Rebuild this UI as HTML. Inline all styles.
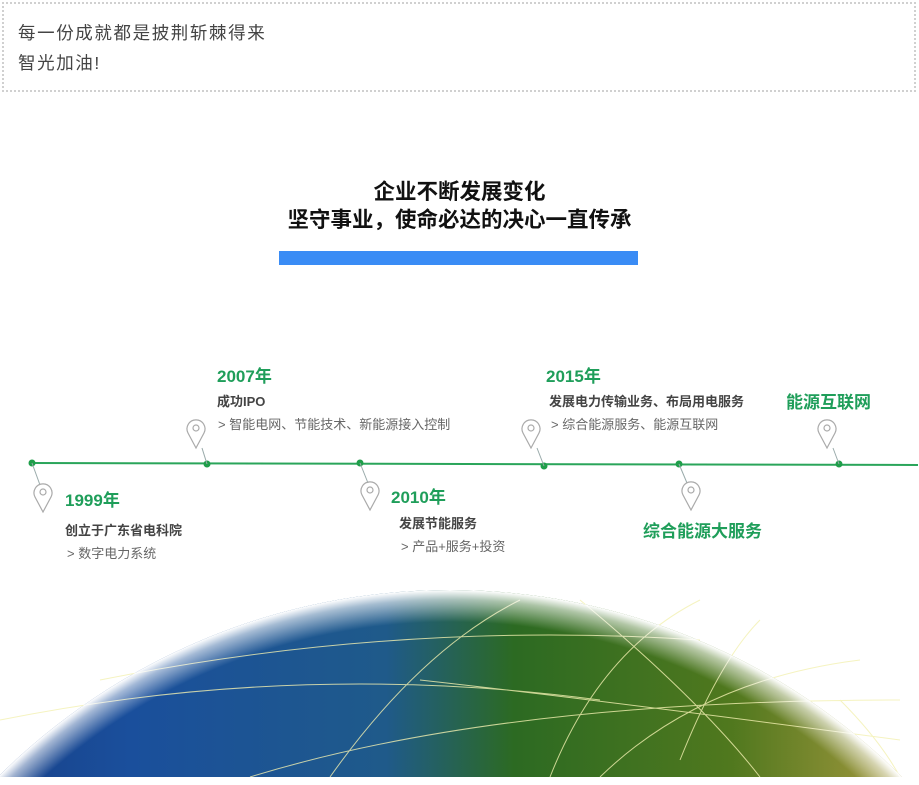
<!DOCTYPE html>
<html><head><meta charset="utf-8"><style>
html,body{margin:0;width:919px;height:785px;overflow:hidden}
body{background:#fff;position:relative;font-family:"Liberation Sans","Noto Sans CJK SC",sans-serif}
.a{position:absolute;white-space:nowrap}
.box{position:absolute;left:2px;top:2px;width:910px;height:86px;border:2px dotted #d0d0d0}
.q{font-size:17.5px;color:#444;letter-spacing:1.6px}
.t{font-size:21.5px;font-weight:bold;color:#111;left:0;width:919px;text-align:center}
.y{font-size:17px;font-weight:bold;color:#1f9e5a}
.h{font-size:13px;font-weight:bold;color:#444}
.s{font-size:13px;color:#666}
</style></head><body>
<div class="box"></div>
<div class="a q" style="left:18px;top:20px">每一份成就都是披荆斩棘得来</div>
<div class="a q" style="left:18px;top:50px">智光加油!</div>
<div class="a t" style="top:175px">企业不断发展变化</div>
<div class="a t" style="top:203px">坚守事业，使命必达的决心一直传承</div>
<div class="a" style="left:279px;top:251px;width:359px;height:14px;background:#3a8cf5"></div>

<svg class="a" style="left:0;top:0" width="919" height="785">
<defs>
<linearGradient id="g" x1="0" x2="1" y1="0" y2="0">
<stop offset="0" stop-color="#152f70"/><stop offset="0.25" stop-color="#1a4f9c"/>
<stop offset="0.45" stop-color="#1f5a8a"/><stop offset="0.55" stop-color="#2c6a22"/>
<stop offset="0.72" stop-color="#50781e"/><stop offset="0.86" stop-color="#a89a40"/>
<stop offset="1" stop-color="#d8c890"/></linearGradient>
<radialGradient id="w" cx="450" cy="1230" r="640" gradientUnits="userSpaceOnUse">
<stop offset="0.95" stop-color="#fff" stop-opacity="0"/><stop offset="0.985" stop-color="#fff" stop-opacity="0.6"/><stop offset="1" stop-color="#fff" stop-opacity="1"/></radialGradient>
<clipPath id="c"><rect x="0" y="560" width="919" height="217"/></clipPath>
</defs>
<g clip-path="url(#c)">
<circle cx="450" cy="1230" r="640" fill="url(#g)"/>
<path d="M0 720 Q300 660 600 700 M100 680 Q400 620 700 640 M330 777 Q420 650 520 600 M550 777 Q600 650 700 600 M600 777 Q700 680 860 660 M250 777 Q500 700 900 700 M680 760 Q720 660 760 620 M420 680 Q600 700 900 740 M580 600 Q700 700 760 777 M840 700 Q880 740 900 777" stroke="#f2f0b0" stroke-width="1" fill="none" opacity="0.8"/>
<circle cx="450" cy="1230" r="640" fill="url(#w)"/>
</g>
<line x1="32" y1="463" x2="918" y2="465" stroke="#2aa55a" stroke-width="2"/>
<g fill="#1f9e4a"><circle cx="32" cy="463" r="3.5"/><circle cx="207" cy="464" r="3.5"/><circle cx="360" cy="463" r="3.5"/><circle cx="544" cy="466" r="3.5"/><circle cx="679" cy="464" r="3.5"/><circle cx="839" cy="464" r="3.5"/></g>
<g fill="none" stroke="#9aa" stroke-width="1">
<path d="M32 463 L40 485"/><path d="M207 464 L202 448"/><path d="M360 463 L368 483"/><path d="M544 466 L537 448"/><path d="M679 464 L687 483"/><path d="M839 464 L833 448"/>
</g>
<g fill="none" stroke="#aaa" stroke-width="1.2">
<g transform="translate(43,485)"><path d="M0 27 L-8 12 A9 9 0 1 1 8 12 Z"/><circle cx="0" cy="7" r="3"/></g>
<g transform="translate(196,421)"><path d="M0 27 L-8 12 A9 9 0 1 1 8 12 Z"/><circle cx="0" cy="7" r="3"/></g>
<g transform="translate(370,483)"><path d="M0 27 L-8 12 A9 9 0 1 1 8 12 Z"/><circle cx="0" cy="7" r="3"/></g>
<g transform="translate(531,421)"><path d="M0 27 L-8 12 A9 9 0 1 1 8 12 Z"/><circle cx="0" cy="7" r="3"/></g>
<g transform="translate(691,483)"><path d="M0 27 L-8 12 A9 9 0 1 1 8 12 Z"/><circle cx="0" cy="7" r="3"/></g>
<g transform="translate(827,421)"><path d="M0 27 L-8 12 A9 9 0 1 1 8 12 Z"/><circle cx="0" cy="7" r="3"/></g>
</g>
</svg>

<div class="a y" style="left:217px;top:362px">2007年</div>
<div class="a h" style="left:217px;top:391px">成功IPO</div>
<div class="a s" style="left:218px;top:414px">&gt; 智能电网、节能技术、新能源接入控制</div>
<div class="a y" style="left:65px;top:486px">1999年</div>
<div class="a h" style="left:65px;top:520px">创立于广东省电科院</div>
<div class="a s" style="left:67px;top:543px">&gt; 数字电力系统</div>
<div class="a y" style="left:391px;top:483px">2010年</div>
<div class="a h" style="left:399px;top:513px">发展节能服务</div>
<div class="a s" style="left:401px;top:536px">&gt; 产品+服务+投资</div>
<div class="a y" style="left:546px;top:362px">2015年</div>
<div class="a h" style="left:549px;top:391px">发展电力传输业务、布局用电服务</div>
<div class="a s" style="left:551px;top:414px">&gt; 综合能源服务、能源互联网</div>
<div class="a y" style="left:786px;top:388px">能源互联网</div>
<div class="a y" style="left:643px;top:517px">综合能源大服务</div>
</body></html>
